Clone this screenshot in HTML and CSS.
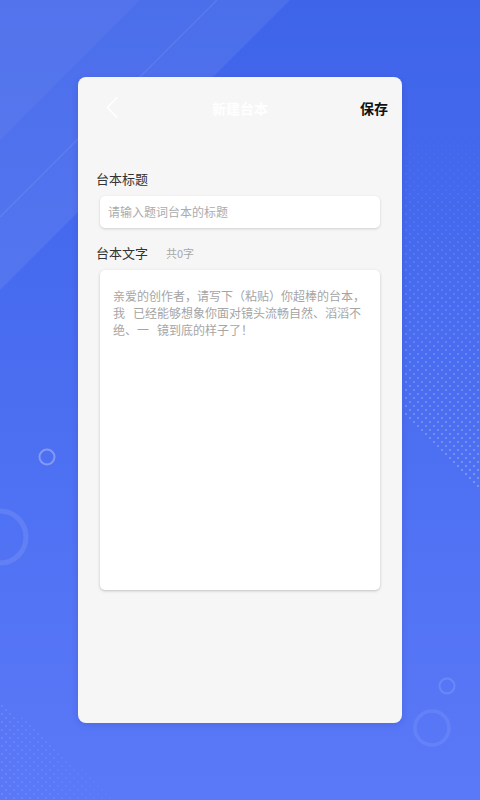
FILE: index.html
```html
<!DOCTYPE html>
<html lang="zh-CN">
<head>
<meta charset="utf-8">
<title>新建台本</title>
<link rel="stylesheet" href="styles.css">
</head>
<body>
<svg class="bg" width="480" height="800" viewBox="0 0 480 800" aria-hidden="true">
  <defs>
    <linearGradient id="bgGrad" x1="0" y1="0" x2="0" y2="1">
      <stop offset="0" stop-color="#3e64ea"/>
      <stop offset="0.5" stop-color="#4b6ef1"/>
      <stop offset="1" stop-color="#5a79f8"/>
    </linearGradient>
    <pattern id="dots" width="8" height="8" patternUnits="userSpaceOnUse">
      <circle cx="2" cy="2" r="1.1" fill="#fff"/>
      <circle cx="6" cy="6" r="1.1" fill="#fff"/>
    </pattern>
    <linearGradient id="dotFade" x1="0" y1="0" x2="0" y2="1">
      <stop offset="0" stop-color="#fff" stop-opacity="0"/>
      <stop offset="0.35" stop-color="#fff" stop-opacity="0.25"/>
      <stop offset="1" stop-color="#fff" stop-opacity="0.7"/>
    </linearGradient>
    <mask id="dotMask">
      <polygon points="404,120 480,120 480,492 404,418" fill="url(#dotFade)"/>
    </mask>
    <linearGradient id="dotFade2" x1="0" y1="0" x2="1" y2="0">
      <stop offset="0" stop-color="#fff" stop-opacity="0.3"/>
      <stop offset="1" stop-color="#fff" stop-opacity="0.05"/>
    </linearGradient>
    <mask id="dotMask2">
      <polygon points="0,704 20,716 105,790 115,800 0,800" fill="url(#dotFade2)"/>
    </mask>
  </defs>
  <rect width="480" height="800" fill="url(#bgGrad)"/>
  <polygon points="0,0 290,0 0,290" fill="#fff" opacity="0.07"/>
  <polygon points="0,0 140,0 0,140" fill="#fff" opacity="0.04"/>
  <line x1="0" y1="217" x2="217" y2="0" stroke="#fff" stroke-opacity="0.08" stroke-width="1.5"/>
  <rect x="400" y="120" width="80" height="380" fill="url(#dots)" mask="url(#dotMask)" opacity="0.45"/>
  <rect x="0" y="700" width="120" height="100" fill="url(#dots)" mask="url(#dotMask2)" opacity="0.4"/>
  <circle cx="47" cy="457" r="7.5" fill="none" stroke="#fff" stroke-opacity="0.3" stroke-width="2"/>
  <circle cx="0" cy="537" r="26" fill="none" stroke="#fff" stroke-opacity="0.1" stroke-width="5"/>
  <circle cx="447" cy="686" r="7.5" fill="none" stroke="#fff" stroke-opacity="0.13" stroke-width="2"/>
  <circle cx="432" cy="728" r="17" fill="none" stroke="#fff" stroke-opacity="0.08" stroke-width="3.5"/>
</svg>

<main class="card">
  <header class="topbar">
    <span class="back">
      <svg width="12" height="21" viewBox="0 0 12 21" aria-hidden="true">
        <polyline points="10.5,1 1.5,10.5 10.5,20" fill="none" stroke="#fff" stroke-width="1.6" stroke-linecap="round" stroke-linejoin="round"/>
      </svg>
    </span>
    <h1 class="title">新建台本</h1>
    <span class="save">保存</span>
  </header>

  <section class="form">
    <div class="label">台本标题</div>
    <div class="input">请输入题词台本的标题</div>

    <div class="label label-row">台本文字<span class="count">共0字</span></div>
    <div class="textarea">亲爱的创作者，请写下（粘贴）你超棒的台本，<br>我&nbsp;&nbsp;&nbsp;已经能够想象你面对镜头流畅自然、滔滔不<br>绝、一&nbsp;&nbsp;&nbsp;镜到底的样子了！</div>
  </section>
</main>
</body>
</html>
```

FILE: styles.css
```css
* {
  box-sizing: border-box;
}

html, body {
  margin: 0;
  padding: 0;
}

body {
  position: relative;
  width: 480px;
  height: 800px;
  overflow: hidden;
  display: flex;
  align-items: center;
  justify-content: center;
  font-family: "Noto Sans CJK SC", "Noto Sans", sans-serif;
  background: #4b6ef1;
}

.bg {
  position: absolute;
  left: 0;
  top: 0;
  z-index: 0;
}

.card {
  position: relative;
  z-index: 1;
  width: 324px;
  height: 646px;
  background: #f6f6f6;
  border-radius: 8px;
  box-shadow: 0 2px 6px rgba(20, 40, 140, 0.15);
}

.topbar {
  display: grid;
  grid-template-columns: 1fr auto 1fr;
  align-items: center;
  height: 61px;
  padding: 0 14px;
}

.back {
  display: flex;
  align-items: center;
  margin-left: 14px;
}

.title {
  margin: 0;
  font-size: 14px;
  font-weight: 700;
  color: #ffffff;
  line-height: 20px;
}

.save {
  justify-self: end;
  font-size: 14px;
  font-weight: 700;
  color: #111111;
  line-height: 20px;
}

.form {
  padding: 31px 22px 0 22px;
}

.label {
  margin-left: -4px;
  font-size: 13px;
  line-height: 20px;
  color: #333333;
}

.label-row {
  display: flex;
  align-items: center;
  margin-top: 15px;
}

.count {
  margin-left: 18px;
  font-size: 11px;
  color: #a8a8a8;
}

.input {
  margin-top: 7px;
  height: 32px;
  padding: 0 8px;
  background: #ffffff;
  border-radius: 5px;
  box-shadow: 0 1px 3px rgba(0, 0, 0, 0.16);
  font-size: 12px;
  line-height: 32px;
  color: #ababab;
}

.textarea {
  margin-top: 7px;
  height: 320px;
  padding: 17px 13px;
  background: #ffffff;
  border-radius: 5px;
  box-shadow: 0 1px 3px rgba(0, 0, 0, 0.22);
  font-size: 12px;
  line-height: 17px;
  color: #a5a5a5;
}
```
